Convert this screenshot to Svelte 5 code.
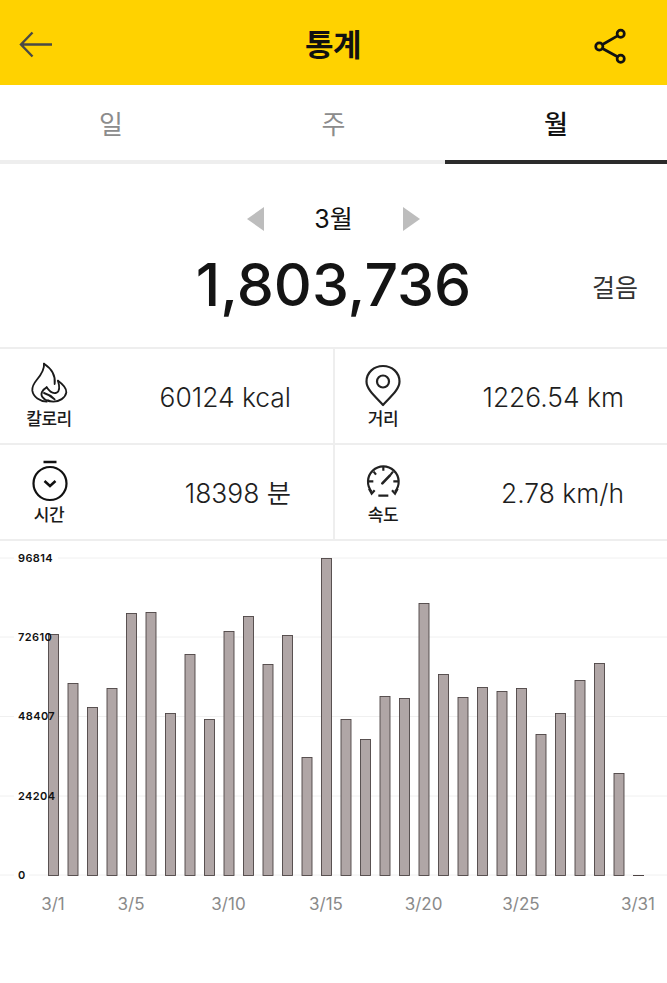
<script>
  const tops = [634,683,707,688,613,612,713,654,719,631,616,664,635,757,558,719,739,696,698,603,674,697,687,691,688,734,713,680,663,773,875];
  const base = 875;
  const bars = tops.map((t, i) => ({ x: 48 + i * 19.5, y: t, h: base - t }));
  const grid = [
    { y: 558, label: '96814' },
    { y: 637, label: '72610' },
    { y: 716.5, label: '48407' },
    { y: 796, label: '24204' },
    { y: 875, label: '0' }
  ];
  const xLabels = [
    { x: 53, t: '3/1' }, { x: 131, t: '3/5' }, { x: 228.5, t: '3/10' }, { x: 326, t: '3/15' },
    { x: 423.5, t: '3/20' }, { x: 521, t: '3/25' }, { x: 638, t: '3/31' }
  ];
  const tabs = [{ t: '일' }, { t: '주' }, { t: '월', on: true }];
</script>

<div class="page">
  <header class="top">
    <svg class="back" width="36" height="28" viewBox="0 0 36 28" fill="none" stroke="#4a4a45" stroke-width="2.400">
      <path d="M15.500 3.500 L4 15.500 L15.500 27.500 M4 15.500 H35" />
    </svg>
    <h1>통계</h1>
    <svg class="share" width="36" height="40" viewBox="0 0 36 40" fill="none" stroke="#111" stroke-width="2.700">
      <path d="M7.500 21.500 L22.500 12.800 M7.500 25.500 L22.500 33.800" />
      <circle cx="25.700" cy="10.800" r="3.600" /><circle cx="4.300" cy="23.500" r="3.600" /><circle cx="25.700" cy="35.800" r="3.600" />
    </svg>
  </header>

  <nav class="tabs">
    {#each tabs as tab}
      <div class="tab" class:on={tab.on}>{tab.t}</div>
    {/each}
  </nav>

  <section class="summary">
    <div class="month">
      <span class="tri left"></span>
      <span class="mlabel">3월</span>
      <span class="tri right"></span>
    </div>
    <div class="total">
      <span class="num">1,803,736</span>
      <span class="unit">걸음</span>
    </div>
  </section>

  <section class="stats">
    <div class="cell">
      <div class="ic">
        <svg width="38" height="42" viewBox="33 18 114 126" fill="none" stroke="#1a1a1a" stroke-width="5.500" stroke-linecap="round" stroke-linejoin="round">
          <path d="M72 17 C92 30 108 48 104 78" />
          <path d="M72 17 C74 35 62 52 50 66 C40 78 36 88 37 98 C40 118 60 130 80 131" />
          <path d="M114 68 C128 78 140 90 139 103 C136 120 118 131 100 131 C92 131 88 130 84 127" />
          <path d="M80 88 C66 96 60 108 68 118 C72 124 80 128 88 130" />
          <path d="M80 88 C88 100 100 108 110 104 C118 100 120 88 114 68" />
          <path d="M72 105 C82 108 95 115 104 124" />
        </svg>
      </div>
      <div class="lab">칼로리</div>
      <div class="val">60124 kcal</div>
    </div>
    <div class="cell r">
      <div class="ic">
        <svg width="38" height="42" viewBox="0 0 38 42" fill="none" stroke="#222" stroke-width="2.200">
          <path d="M19 41 C13 34 2.500 26 2.500 17.500 C2.500 8.500 10 2 19 2 C28 2 35.500 8.500 35.500 17.500 C35.500 26 25 34 19 41 Z" stroke-linejoin="round"/>
          <circle cx="19" cy="17.500" r="6" />
        </svg>
      </div>
      <div class="lab">거리</div>
      <div class="val">1226.54 km</div>
    </div>
    <div class="cell">
      <div class="ic">
        <svg width="38" height="42" viewBox="0 0 38 42" fill="none" stroke="#111" stroke-width="2.200">
          <path d="M12.500 2 H25.500" stroke-width="2.500" />
          <circle cx="19" cy="23.500" r="16.500" />
          <path d="M13.500 21 L19 26 L24.500 21" stroke-width="2.500" />
        </svg>
      </div>
      <div class="lab">시간</div>
      <div class="val">18398 분</div>
    </div>
    <div class="cell r">
      <div class="ic">
        <svg width="38" height="42" viewBox="27 6 114 126" fill="none" stroke="#222" stroke-width="6.500">
          <path d="M50 101 A46 46 0 1 1 120 101" />
          <path d="M42 92 L50 107 L59 97 M128 92 L120 107 L111 97" />
          <path d="M85 26 V38 M56 41 L63 50 M114 41 L107 50 M41 70 H55 M129 70 H115 M70 113 H100" />
          <path d="M82 76 L105 52" stroke-width="8" stroke-linecap="round" />
        </svg>
      </div>
      <div class="lab">속도</div>
      <div class="val">2.78 km/h</div>
    </div>
  </section>

  <svg class="chart" width="667" height="442" viewBox="0 541 667 442">
    {#each grid as g}
      <line x1="0" x2="667" y1={g.y} y2={g.y} stroke="#f0f0f0" stroke-width="1" />
      <rect x="14" y={g.y - 6} width={g.label.length * 7.2 + 8} height="12" fill="#fff" />
    {/each}
    {#each bars as b}
      {#if b.h > 0}
        <rect x={b.x + 0.5} y={b.y + 0.5} width="10" height={b.h} fill="#b0a6a6" stroke="#4d4444" stroke-width="0.900" />
      {:else}
        <line x1={b.x} x2={b.x + 11} y1={base + 0.5} y2={base + 0.5} stroke="#4d4444" stroke-width="1" />
      {/if}
    {/each}
    {#each grid as g}
      <text class="yl" x="18" y={g.y + 3.800}>{g.label}</text>
    {/each}
    {#each xLabels as l}
      <text class="xl" x={l.x} y="910" text-anchor="middle">{l.t}</text>
    {/each}
  </svg>
</div>

<style>
  :global(body) { margin: 0; background: #fff; }
  .page {
    width: 667px;
    height: 983px;
    overflow: hidden;
    background: #fff;
    font-family: Inter, "Noto Sans CJK KR", sans-serif;
    color: #111;
  }
  .top {
    height: 85px;
    background: #ffd200;
    display: grid;
    grid-template-columns: 1fr auto 1fr;
    align-items: center;
    padding: 0 36px 0 17px;
  }
  .top h1 {
    margin: 0;
    font: 700 31px/1 "Noto Sans CJK KR", sans-serif;
    color: #111;
    letter-spacing: -0.5px;
    position: relative;
    left: 9px;
  }
  .back { display: block; overflow: visible; }
  .share { display: block; overflow: visible; justify-self: end; }
  .tabs {
    display: grid;
    grid-template-columns: 222px 223px 222px;
    height: 79px;
  }
  .tab {
    display: flex;
    align-items: center;
    justify-content: center;
    box-sizing: border-box;
    border-bottom: 4px solid #eeeeee;
    font: 400 26px/1 "Noto Sans CJK KR", sans-serif;
    color: #8c8c8c;
  }
  .tab.on { border-bottom-color: #2b2b2b; color: #111; font-weight: 500; }
  .summary { height: 183px; box-sizing: border-box; padding-top: 38px; }
  .month {
    display: flex;
    align-items: center;
    justify-content: center;
    height: 34px;
  }
  .mlabel { width: 139px; text-align: center; font-size: 25px; line-height: 34px; color: #111; }
  .tri { width: 0; height: 0; border-top: 12px solid transparent; border-bottom: 12px solid transparent; }
  .tri.left { border-right: 17px solid #bdbdbd; }
  .tri.right { border-left: 17px solid #bdbdbd; }
  .total { position: relative; height: 78px; margin-top: 10px; text-align: center; }
  .num { font-size: 59px; line-height: 78px; font-weight: 450; color: #141414; }
  .unit { position: absolute; right: 29px; top: 25px; font-size: 25px; line-height: 34px; color: #333; }
  .stats {
    display: grid;
    grid-template-columns: 333px 334px;
    grid-auto-rows: 96px;
    border-top: 2px solid #eeeeee;
    height: 192px;
  }
  .cell {
    position: relative;
    border-bottom: 2px solid #eeeeee;
    height: 94px;
  }
  .cell.r { border-left: 2px solid #eeeeee; }
  .ic { position: absolute; left: 31px; top: 15px; width: 38px; height: 42px; }
  .r .ic { left: 29px; }
  .ic svg { display: block; overflow: visible; }
  .lab {
    position: absolute;
    left: -1px;
    width: 100px;
    top: 57px;
    text-align: center;
    font: 500 17px/24px "Noto Sans CJK KR", sans-serif;
    color: #1a1a1a;
    letter-spacing: -0.5px;
  }
  .r .lab { left: -2px; }
  .val {
    position: absolute;
    right: 42px;
    top: 30px;
    font-size: 26.400px;
    line-height: 36px;
    font-weight: 350;
    color: #1e1e1e;
  }
  .r .val { right: 43px; }
  .chart { display: block; }
  .yl { font: 600 11px Inter, sans-serif; fill: #111; letter-spacing: 0.4px; }
  .xl { font: 400 17px Inter, sans-serif; fill: #8a8a8a; }
</style>
